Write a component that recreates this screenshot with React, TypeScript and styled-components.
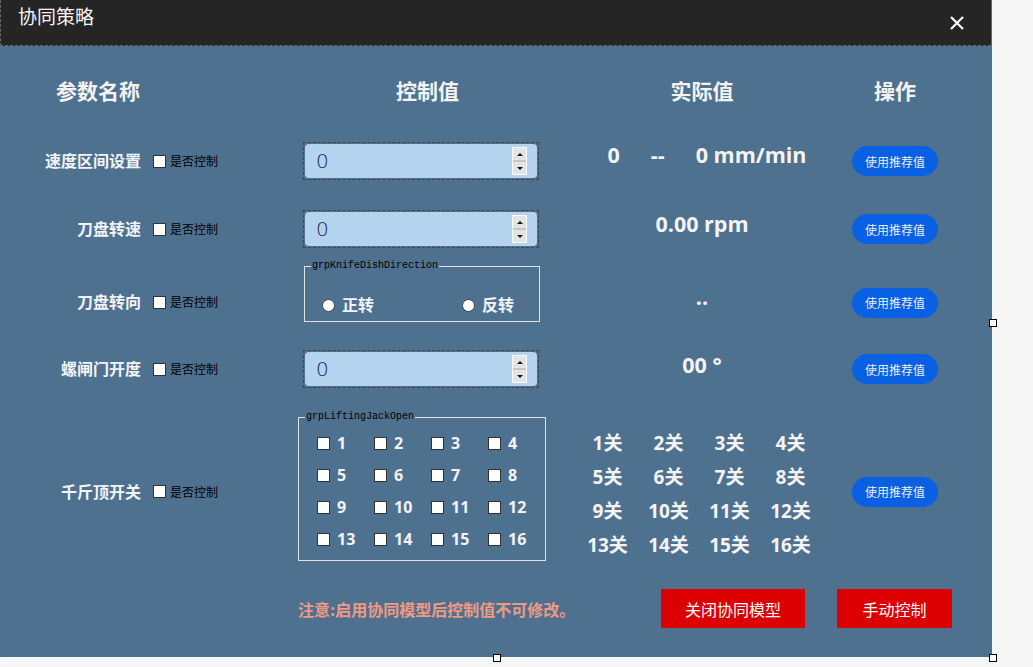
import React from "react";
import styled, { createGlobalStyle } from "styled-components";

const Global = createGlobalStyle`
  html, body { margin: 0; padding: 0; background: #f6f6f6; }
  body { font-family: "Noto Sans CJK SC", sans-serif; }
  * { box-sizing: border-box; }
`;

const CJK = `"Open Sans", "Noto Sans CJK SC", sans-serif`;

const Surface = styled.div`
  position: relative;
  width: 1033px;
  height: 667px;
  background: #f6f6f6;
`;

const Form = styled.div`
  width: 992px;
  height: 657px;
  background: #4f7190;
  border-right: 1px dotted #666;
  border-bottom: 1px dotted #666;
  display: flex;
  flex-direction: column;
`;

const TitleBar = styled.div`
  flex: none;
  height: 46px;
  background: #252525;
  border-bottom: 1px dashed #6a6a6a;
  border-left: 1px dashed #6a6a6a;
  display: flex;
  align-items: flex-start;
  justify-content: space-between;
  padding: 4px 26px 0 17px;
`;

const Title = styled.div`
  color: #f4f4f4;
  font-family: ${CJK};
  font-size: 19px;
  line-height: 26px;
`;

const Close = styled.div`
  margin-top: 8px;
  width: 16px;
  height: 16px;
`;

const Row = styled.div<{ $top: number; $h: number }>`
  margin-top: ${(p) => p.$top}px;
  height: ${(p) => p.$h}px;
  display: grid;
  grid-template-columns: 298px 247px 304px 92px;
  align-items: center;
`;

const HeadCell = styled.div<{ $w?: number; $pl?: number }>`
  width: ${(p) => p.$w ?? 0}px;
  padding-left: ${(p) => p.$pl ?? 0}px;
  text-align: center;
  color: #f4f4f4;
  font-family: ${CJK};
  font-weight: 700;
  font-size: 21px;
  line-height: 28px;
`;

const NameCell = styled.div<{ $pt?: number }>`
  display: flex;
  align-items: center;
  padding-top: ${(p) => p.$pt ?? 0}px;
`;

const Name = styled.div`
  width: 141px;
  text-align: right;
  color: #f2f4f8;
  font-family: ${CJK};
  font-weight: 700;
  font-size: 16px;
  line-height: 22px;
`;

const Box = styled.span`
  display: inline-block;
  width: 13px;
  height: 13px;
  background: #fff;
  border: 1px solid #333;
  flex: none;
`;

const CtrlCheck = styled.div`
  margin-left: 12px;
  display: flex;
  align-items: center;
  gap: 4px;
  color: #000;
  font-family: "Noto Sans CJK SC", sans-serif;
  font-size: 12px;
  line-height: 16px;
`;

const Spin = styled.div`
  margin-left: 5px;
  width: 236px;
  height: 38px;
  border: 1px dashed #444;
  padding: 1px;
  display: flex;
`;

const SpinInner = styled.div`
  flex: 1;
  background: #b3d3ee;
  border-radius: 4px;
  display: flex;
  align-items: center;
  justify-content: space-between;
  padding: 0 10px 0 11px;
`;

const SpinValue = styled.span`
  font-family: "DejaVu Sans", sans-serif;
  font-weight: 300;
  font-size: 20px;
  color: #23205a;
`;

const SpinBtns = styled.div`
  width: 15px;
  height: 28px;
  border: 1px solid #fafafa;
  background: #e4e4e4;
  display: flex;
  flex-direction: column;
`;

const SpinHalf = styled.div<{ $down?: boolean }>`
  flex: 1;
  display: flex;
  align-items: center;
  justify-content: center;
  border-top: ${(p) => (p.$down ? "2px solid #c8c8c8" : "none")};
`;

const Tri = styled.span<{ $down?: boolean }>`
  width: 0;
  height: 0;
  border-left: 3px solid transparent;
  border-right: 3px solid transparent;
  ${(p) =>
    p.$down ? "border-top: 3px solid #111;" : "border-bottom: 3px solid #111;"}
`;

const Group = styled.fieldset<{ $ml: number; $w: number; $h: number }>`
  margin: 0 0 0 ${(p) => p.$ml}px;
  width: ${(p) => p.$w}px;
  height: ${(p) => p.$h}px;
  align-self: start;
  border: 1px solid #e2e2e2;
  padding: 0;
`;

const Legend = styled.legend`
  font-family: "Liberation Mono", monospace;
  font-size: 10px;
  line-height: 10px;
  color: #000;
  padding: 0 1px;
  margin-left: 6px;
`;

const RadioRow = styled.div`
  display: flex;
  column-gap: 88px;
  padding: 23px 0 0 17px;
`;

const RadioItem = styled.div`
  display: flex;
  align-items: center;
  gap: 7px;
  color: #f2f4f8;
  font-family: ${CJK};
  font-weight: 700;
  font-size: 16px;
  line-height: 22px;
`;

const RadioDot = styled.span`
  width: 13px;
  height: 13px;
  border-radius: 50%;
  background: #fff;
  border: 1px solid #444;
`;

const JackGrid = styled.div`
  display: grid;
  grid-template-columns: repeat(4, 57px);
  grid-auto-rows: 32px;
  padding: 5px 0 0 18px;
`;

const JackItem = styled.div`
  display: flex;
  align-items: center;
  gap: 7px;
  color: #f2f4f8;
  font-family: ${CJK};
  font-weight: 700;
  font-size: 16px;
`;

const Actual = styled.div<{ $mt?: number; $pl?: number }>`
  margin-top: ${(p) => p.$mt ?? 0}px;
  padding-left: ${(p) => p.$pl ?? 10}px;
  display: flex;
  justify-content: center;
  align-items: center;
  color: #f4f4f4;
  font-family: ${CJK};
  font-weight: 700;
  font-size: 21.5px;
  line-height: 26px;
`;

const Sep = styled.span<{ $w: number }>`
  display: inline-block;
  width: ${(p) => p.$w}px;
`;

const StatusGrid = styled.div`
  padding-left: 4px;
  display: grid;
  grid-template-columns: repeat(4, 61px);
  grid-auto-rows: 34px;
  justify-content: center;
  align-items: center;
  margin-top: 12px;
`;

const Status = styled.div`
  text-align: center;
  color: #f4f4f4;
  font-family: ${CJK};
  font-weight: 700;
  font-size: 19px;
`;

const UseBtn = styled.button<{ $mt?: number }>`
  justify-self: center;
  margin-top: ${(p) => p.$mt ?? 0}px;
  width: 86px;
  height: 30px;
  border: none;
  border-radius: 15px;
  background: #0a60e2;
  color: #e8eef8;
  font-family: "Noto Sans CJK SC", sans-serif;
  font-size: 12px;
  padding: 0;
`;

const Footer = styled.div`
  margin-top: 28px;
  height: 39px;
  display: flex;
  align-items: center;
  padding-left: 298px;
`;

const Note = styled.div`
  width: 363px;
  color: #ef9a84;
  font-family: "Noto Sans CJK SC", sans-serif;
  font-weight: 700;
  font-size: 16px;
`;

const RedBtn = styled.button<{ $w: number; $ml: number }>`
  margin-left: ${(p) => p.$ml}px;
  width: ${(p) => p.$w}px;
  height: 39px;
  border: none;
  background: #dc0000;
  color: #fff;
  font-family: "Noto Sans CJK SC", sans-serif;
  font-size: 16px;
  padding: 0;
`;

const Handle = styled.span<{ $x: number; $y: number }>`
  position: absolute;
  left: ${(p) => p.$x - 4}px;
  top: ${(p) => p.$y - 4}px;
  width: 8px;
  height: 8px;
  background: #fff;
  border: 1px solid #000;
`;

const Check = () => (
  <CtrlCheck>
    <Box />
    是否控制
  </CtrlCheck>
);

const SpinBox = () => (
  <Spin>
    <SpinInner>
      <SpinValue>0</SpinValue>
      <SpinBtns>
        <SpinHalf>
          <Tri />
        </SpinHalf>
        <SpinHalf $down>
          <Tri $down />
        </SpinHalf>
      </SpinBtns>
    </SpinInner>
  </Spin>
);

export default function App() {
  const nums = Array.from({ length: 16 }, (_, i) => i + 1);
  return (
    <Surface>
      <Global />
      <Form>
        <TitleBar>
          <Title>协同策略</Title>
          <Close>
            <svg width="16" height="16" viewBox="0 0 16 16">
              <path d="M2 2 L14 14 M14 2 L2 14" stroke="#fff" strokeWidth="2.2" />
            </svg>
          </Close>
        </TitleBar>

        <Row $top={31} $h={28}>
          <HeadCell $w={196}>参数名称</HeadCell>
          <HeadCell $w={247} $pl={12}>控制值</HeadCell>
          <HeadCell $w={304} $pl={10}>实际值</HeadCell>
          <HeadCell $w={92}>操作</HeadCell>
        </Row>

        <Row $top={37} $h={38}>
          <NameCell>
            <Name>速度区间设置</Name>
            <Check />
          </NameCell>
          <SpinBox />
          <Actual $mt={-12} $pl={20}>
            0<Sep $w={31} />--<Sep $w={31} />0 mm/min
          </Actual>
          <UseBtn>使用推荐值</UseBtn>
        </Row>

        <Row $top={30} $h={38}>
          <NameCell>
            <Name>刀盘转速</Name>
            <Check />
          </NameCell>
          <SpinBox />
          <Actual $mt={-10}>0.00 rpm</Actual>
          <UseBtn>使用推荐值</UseBtn>
        </Row>

        <Row $top={13} $h={61}>
          <NameCell $pt={21}>
            <Name>刀盘转向</Name>
            <Check />
          </NameCell>
          <Group $ml={6} $w={236} $h={61}>
            <Legend>grpKnifeDishDirection</Legend>
            <RadioRow>
              <RadioItem>
                <RadioDot />
                正转
              </RadioItem>
              <RadioItem>
                <RadioDot />
                反转
              </RadioItem>
            </RadioRow>
          </Group>
          <Actual $mt={10}>..</Actual>
          <UseBtn $mt={22}>使用推荐值</UseBtn>
        </Row>

        <Row $top={28} $h={38}>
          <NameCell>
            <Name>螺闸门开度</Name>
            <Check />
          </NameCell>
          <SpinBox />
          <Actual $mt={-8}>00 °</Actual>
          <UseBtn>使用推荐值</UseBtn>
        </Row>

        <Row $top={24} $h={149}>
          <NameCell $pt={10}>
            <Name>千斤顶开关</Name>
            <Check />
          </NameCell>
          <Group $ml={0} $w={247} $h={149}>
            <Legend>grpLiftingJackOpen</Legend>
            <JackGrid>
              {nums.map((n) => (
                <JackItem key={n}>
                  <Box />
                  {n}
                </JackItem>
              ))}
            </JackGrid>
          </Group>
          <StatusGrid>
            {nums.map((n) => (
              <Status key={n}>{n}关</Status>
            ))}
          </StatusGrid>
          <UseBtn $mt={10}>使用推荐值</UseBtn>
        </Row>

        <Footer>
          <Note>注意:启用协同模型后控制值不可修改。</Note>
          <RedBtn $w={144} $ml={0}>关闭协同模型</RedBtn>
          <RedBtn $w={115} $ml={32}>手动控制</RedBtn>
        </Footer>
      </Form>
      <Handle $x={993} $y={323} />
      <Handle $x={497} $y={658} />
      <Handle $x={993} $y={658} />
    </Surface>
  );
}
